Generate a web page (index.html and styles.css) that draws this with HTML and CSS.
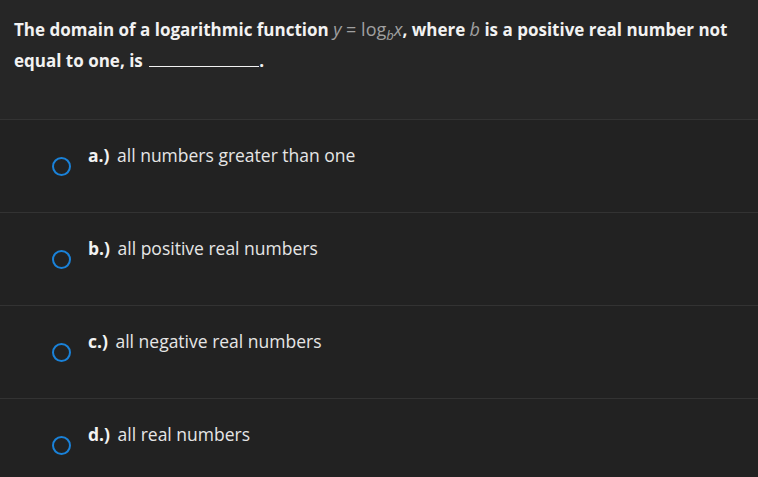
FILE: index.html
```html
<!DOCTYPE html>
<html>
<head>
<meta charset="utf-8">
<link rel="stylesheet" href="styles.css">
</head>
<body>
<div class="quiz">
  <div class="question">
    The domain of a logarithmic function <span class="math"><i>y</i> = log<span class="sub"><i>b</i></span><i>x</i></span>, where <span class="math"><i>b</i></span> is a positive real number not equal to one, is <span class="blank"></span>.
  </div>
  <ul class="answers">
    <li class="answer"><span class="radio"></span><span class="label"><b>a.)</b> all numbers greater than one</span></li>
    <li class="answer"><span class="radio"></span><span class="label"><b>b.)</b> all positive real numbers</span></li>
    <li class="answer"><span class="radio"></span><span class="label"><b>c.)</b> all negative real numbers</span></li>
    <li class="answer"><span class="radio"></span><span class="label"><b>d.)</b> all real numbers</span></li>
  </ul>
</div>
</body>
</html>
```
FILE: styles.css
```css
html, body {
  margin: 0;
  padding: 0;
  background: #222222;
}
.quiz {
  width: 758px;
  height: 477px;
  overflow: hidden;
  font-family: "Open Sans", "Liberation Sans", sans-serif;
}
.question {
  background: #262626;
  color: #f2f2f2;
  font-weight: 700;
  font-size: 17px;
  line-height: 30px;
  padding: 14px 14px 0 14px;
  height: 105px;
  border-bottom: 1px solid #333333;
}
.math {
  color: #a0a0a0;
  font-weight: 400;
  font-size: 18px;
}
.math .sub {
  font-size: 13px;
  position: relative;
  top: 4px;
}
.blank {
  display: inline-block;
  width: 110px;
  border-bottom: 1px solid #f2f2f2;
  height: 14px;
  margin-left: 2px;
}
.answers {
  list-style: none;
  margin: 0;
  padding: 0;
}
.answer {
  display: flex;
  align-items: flex-start;
  height: 92px;
  border-bottom: 1px solid #333333;
  padding-left: 52px;
  color: #e6e6e6;
  font-size: 17.5px;
}
.radio {
  width: 15px;
  height: 15px;
  border: 2px solid #1a82d9;
  border-radius: 50%;
  margin-top: 37px;
  flex: none;
}
.label {
  margin-left: 17px;
  margin-top: 23px;
  line-height: 24px;
}
.label b {
  font-weight: 700;
  color: #f2f2f2;
  margin-right: 3px;
}
```
